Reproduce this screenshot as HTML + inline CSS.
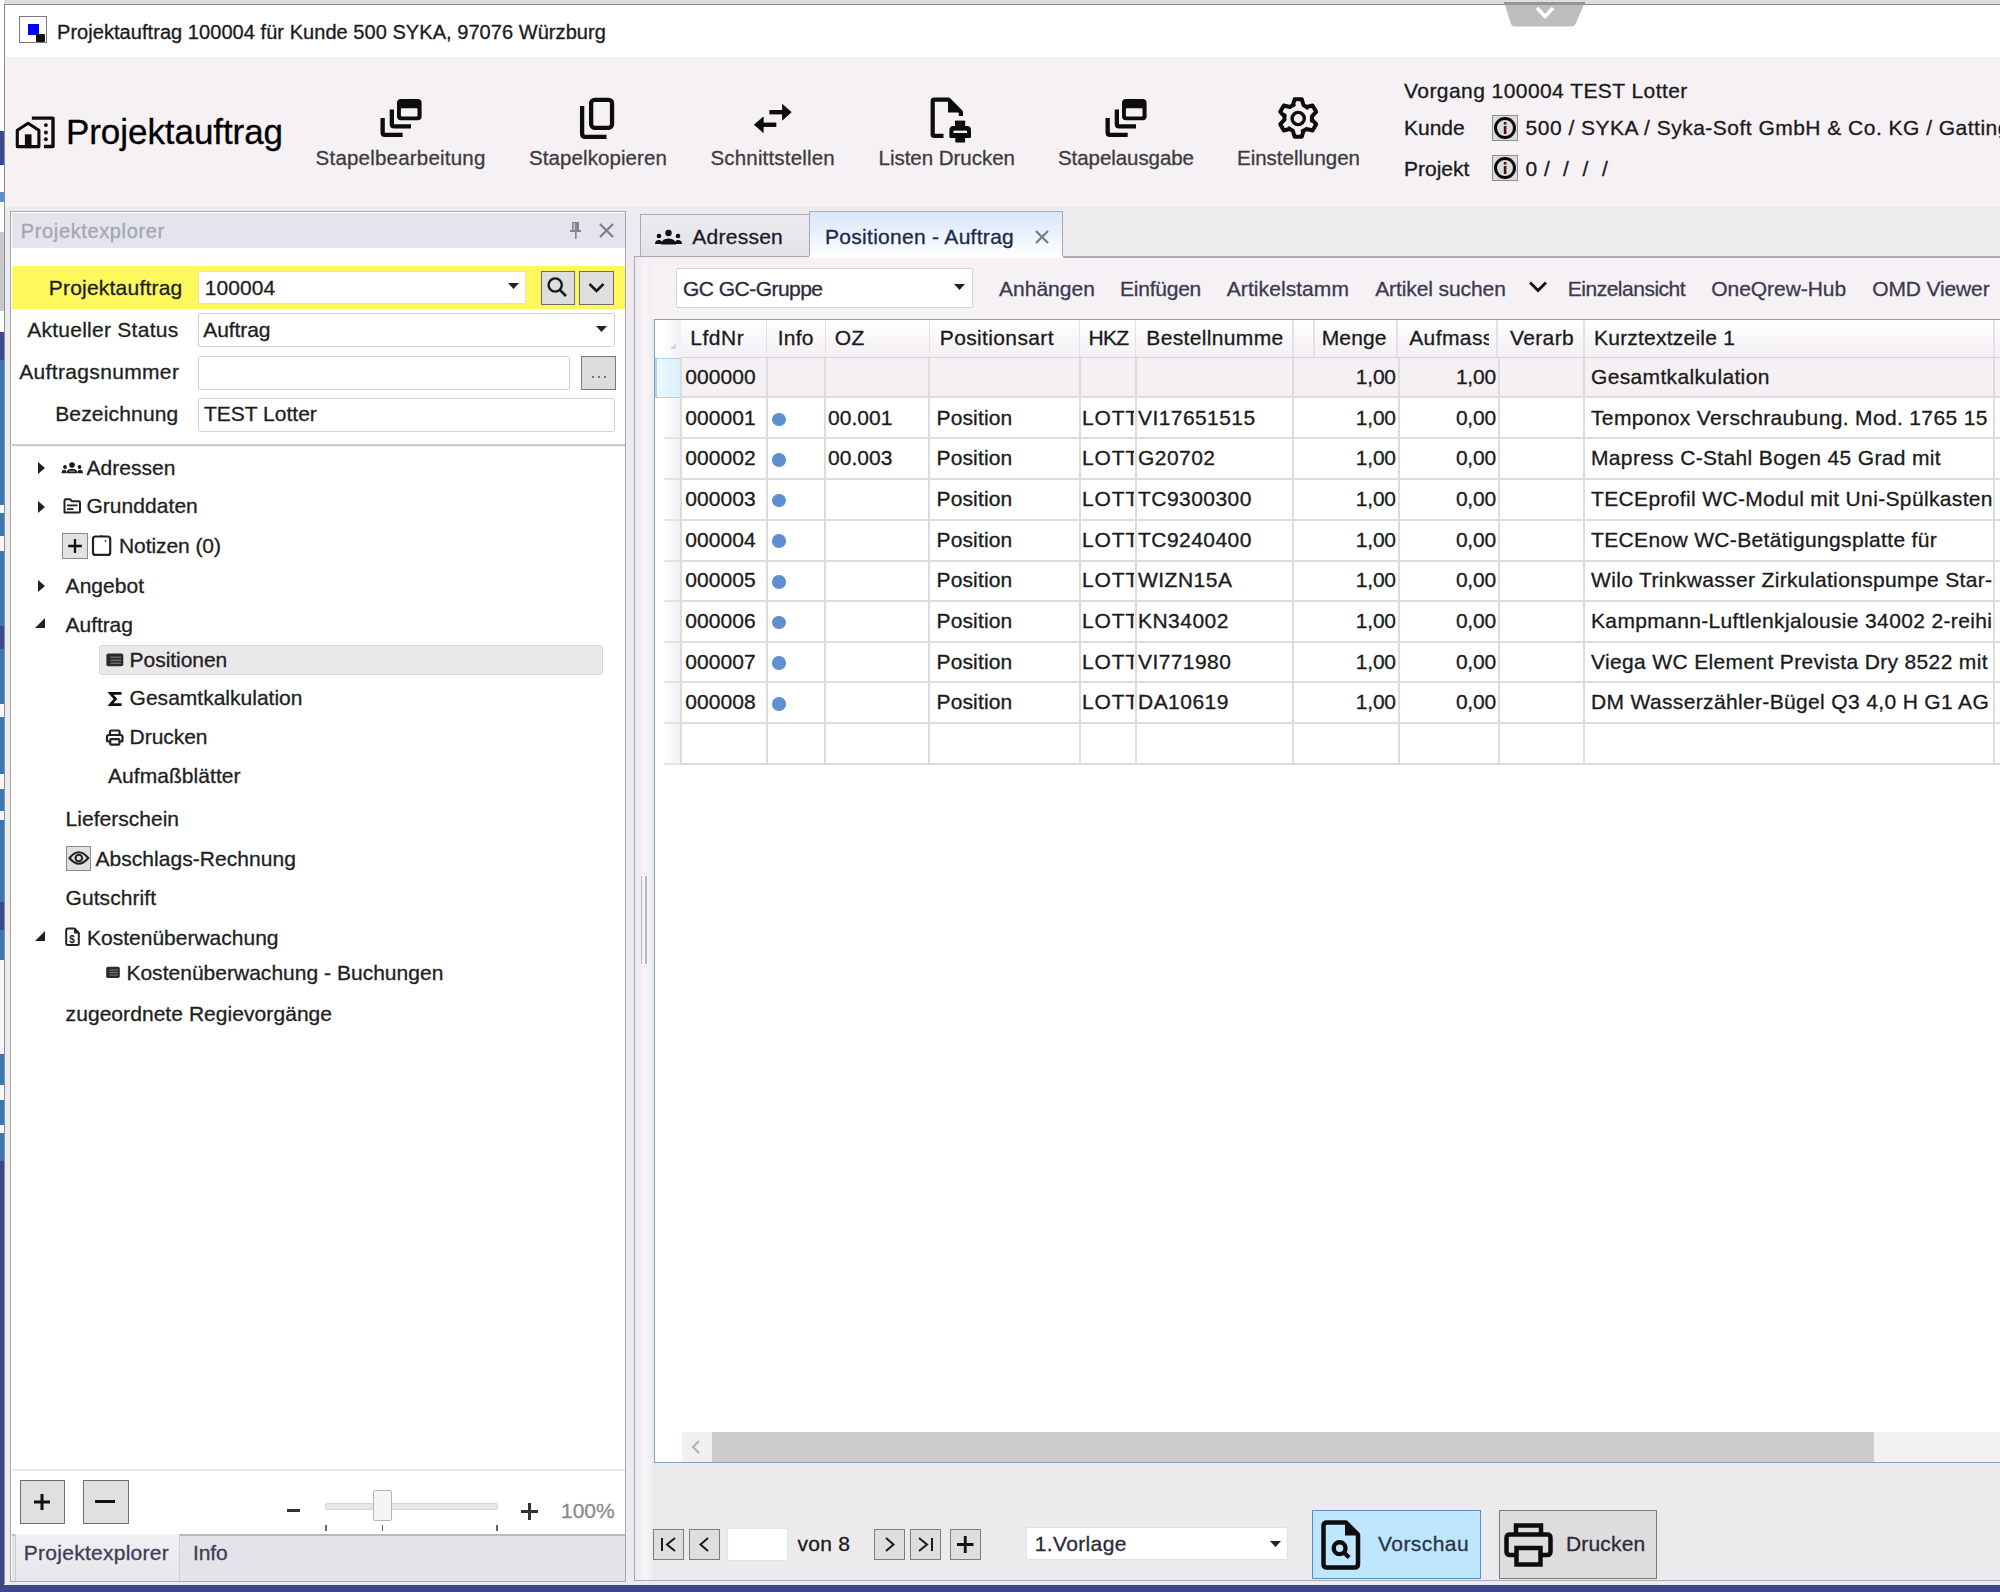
<!DOCTYPE html>
<html><head><meta charset="utf-8"><style>
html,body{margin:0;padding:0;width:2000px;height:1592px;overflow:hidden;background:#eeebef}
body>div,body>svg{position:absolute}
div>div.t{position:absolute}
.t{position:absolute;white-space:pre;font-family:"Liberation Sans",sans-serif;-webkit-text-stroke:0.3px currentColor}
svg{position:absolute;overflow:visible}
</style></head><body>
<div style="left:0px;top:0px;width:2000px;height:1592px;background:#eeebef"></div>
<div style="left:0px;top:0px;width:2000px;height:4px;background:#dedede"></div>
<div style="left:0px;top:0px;width:4px;height:1592px;background:#ffffff"></div>
<div style="left:0px;top:131px;width:4px;height:34px;background:#3d4a90"></div>
<div style="left:0px;top:192px;width:4px;height:10px;background:#5a8fd0"></div>
<div style="left:0px;top:232px;width:4px;height:79px;background:#c8c8cc"></div>
<div style="left:0px;top:332px;width:4px;height:28px;background:#3d4a90"></div>
<div style="left:0px;top:360px;width:4px;height:802px;background:#3b78b2"></div>
<div style="left:0px;top:505px;width:4px;height:8px;background:#f4f6fa"></div>
<div style="left:0px;top:536px;width:4px;height:15px;background:#f4f6fa"></div>
<div style="left:0px;top:704px;width:4px;height:13px;background:#f4f6fa"></div>
<div style="left:0px;top:774px;width:4px;height:15px;background:#f4f6fa"></div>
<div style="left:0px;top:811px;width:4px;height:9px;background:#f4f6fa"></div>
<div style="left:0px;top:960px;width:4px;height:94px;background:#f4f6fa"></div>
<div style="left:0px;top:1085px;width:4px;height:15px;background:#f4f6fa"></div>
<div style="left:0px;top:1125px;width:4px;height:8px;background:#f4f6fa"></div>
<div style="left:0px;top:626px;width:4px;height:23px;background:#3d4a90"></div>
<div style="left:0px;top:902px;width:4px;height:28px;background:#3d4a90"></div>
<div style="left:0px;top:1161px;width:4px;height:431px;background:#3d4688"></div>
<div style="left:0px;top:1584.5px;width:2000px;height:8px;background:#3d4688"></div>
<div style="left:4px;top:4px;width:1996px;height:1px;background:#8c8c8c"></div>
<div style="left:4px;top:4px;width:1px;height:1580px;background:#8c8c8c"></div>
<div style="left:5px;top:5px;width:1995px;height:52px;background:#ffffff"></div>
<div style="left:5px;top:57px;width:1995px;height:150px;background:#f5f1f5"></div>
<div style="left:19px;top:16px;width:26px;height:25px;border:1.5px solid #7a7a7a;background:#fff"></div>
<div style="left:28px;top:24px;width:11px;height:11px;background:#0000ff"></div>
<div style="left:36px;top:34px;width:9px;height:8px;background:#111;border-radius:1px"></div>
<div class="t" style="left:57.0px;top:21.6px;font-size:20px;line-height:20px;color:#1a1a1a;letter-spacing:0.053px;">Projektauftrag 100004 für Kunde 500 SYKA, 97076 Würzburg</div>
<svg style="left:1500px;top:0px" width="90" height="30" viewBox="1500 0 90 30"><path d="M1504 2 H1585 L1575.5 24 Q1574 26.5 1571 26.5 H1515 Q1512 26.5 1511 24 Z" fill="#bdbdbd"/><rect x="1504" y="2" width="81" height="3" fill="#959595"/><path d="M1537 8 L1545 16.5 L1553 8" stroke="#fff" stroke-width="3.4" fill="none"/></svg>
<div class="t" style="left:66.0px;top:114.4px;font-size:35px;line-height:35px;color:#000;letter-spacing:-0.065px;">Projektauftrag</div>
<div class="t" style="left:315.6px;top:147.9px;font-size:20.5px;line-height:20.5px;color:#3c3c3c;letter-spacing:0.208px;">Stapelbearbeitung</div>
<div class="t" style="left:529.0px;top:147.9px;font-size:20.5px;line-height:20.5px;color:#3c3c3c;letter-spacing:0.086px;">Stapelkopieren</div>
<div class="t" style="left:710.5px;top:147.9px;font-size:20.5px;line-height:20.5px;color:#3c3c3c;letter-spacing:0.168px;">Schnittstellen</div>
<div class="t" style="left:878.5px;top:147.9px;font-size:20.5px;line-height:20.5px;color:#3c3c3c;letter-spacing:-0.019px;">Listen Drucken</div>
<div class="t" style="left:1058.0px;top:147.9px;font-size:20.5px;line-height:20.5px;color:#3c3c3c;letter-spacing:-0.064px;">Stapelausgabe</div>
<div class="t" style="left:1237.0px;top:147.9px;font-size:20.5px;line-height:20.5px;color:#3c3c3c;letter-spacing:-0.008px;">Einstellungen</div>
<div class="t" style="left:1404.0px;top:80.4px;font-size:21px;line-height:21px;color:#1a1a1a;letter-spacing:0.435px;">Vorgang 100004 TEST Lotter</div>
<div class="t" style="left:1404.0px;top:116.7px;font-size:21px;line-height:21px;color:#1a1a1a;">Kunde</div>
<div class="t" style="left:1404.0px;top:157.7px;font-size:21px;line-height:21px;color:#1a1a1a;">Projekt</div>
<div class="t" style="left:1525.6px;top:116.7px;font-size:21px;line-height:21px;color:#1a1a1a;letter-spacing:0.480px;">500 / SYKA / Syka-Soft GmbH &amp; Co. KG / Gattingen</div>
<div class="t" style="left:1525.6px;top:157.7px;font-size:21px;line-height:21px;color:#1a1a1a;">0</div>
<div class="t" style="left:1544.0px;top:157.7px;font-size:21px;line-height:21px;color:#1a1a1a;">/</div>
<div class="t" style="left:1563.0px;top:157.7px;font-size:21px;line-height:21px;color:#1a1a1a;">/</div>
<div class="t" style="left:1582.5px;top:157.7px;font-size:21px;line-height:21px;color:#1a1a1a;">/</div>
<div class="t" style="left:1602.0px;top:157.7px;font-size:21px;line-height:21px;color:#1a1a1a;">/</div>
<div style="left:10px;top:211px;width:614px;height:1369px;border:1.5px solid #a6a7ae;background:#ffffff"></div>
<div style="left:11.5px;top:212.5px;width:613px;height:35px;background:#e3e4ec"></div>
<div class="t" style="left:20.8px;top:221.0px;font-size:20px;line-height:20px;color:#a3a6b2;letter-spacing:0.633px;">Projektexplorer</div>
<svg style="left:568px;top:221px" width="16" height="20" viewBox="0 0 16 20"><path d="M4 1 H11 V9 H13 V11 H2 V9 H4 Z" fill="#85868c"/><rect x="5.5" y="2" width="1.5" height="7" fill="#c8c9d0"/><rect x="7" y="11" width="1.6" height="7" fill="#85868c"/></svg>
<svg style="left:598px;top:222px" width="17" height="17" viewBox="0 0 17 17"><path d="M2 2 L15 15 M15 2 L2 15" stroke="#7e7f86" stroke-width="2.2"/></svg>
<div style="left:11.5px;top:266px;width:613px;height:43px;background:#fdf85c"></div>
<div class="t" style="left:48.8px;top:276.9px;font-size:21px;line-height:21px;color:#1e1e1e;letter-spacing:0.208px;">Projektauftrag</div>
<div style="left:198px;top:271px;width:328px;height:33px;background:#fff;border:1px solid #e6e6a0;box-sizing:border-box"></div>
<div class="t" style="left:204.8px;top:276.7px;font-size:21px;line-height:21px;color:#1e1e1e;letter-spacing:0.061px;">100004</div>
<svg style="left:507px;top:282px" width="13" height="8" viewBox="0 0 13 8"><path d="M1 1 H12 L6.5 7 Z" fill="#222"/></svg>
<div style="left:540.5px;top:270.7px;width:34px;height:34px;background:#dedede;border:1.5px solid #6d6d6d;box-sizing:border-box"></div>
<svg style="left:546px;top:276px" width="24" height="24" viewBox="0 0 24 24"><circle cx="9.2" cy="9" r="6.6" stroke="#1a1a1a" stroke-width="2.4" fill="none"/><path d="M13.8 13.8 L20 20" stroke="#1a1a1a" stroke-width="2.6"/></svg>
<div style="left:579px;top:270.7px;width:34.5px;height:34px;background:#dedede;border:1.5px solid #6d6d6d;box-sizing:border-box"></div>
<svg style="left:586px;top:280px" width="21" height="14" viewBox="0 0 21 14"><path d="M3.5 4 L10.5 11 L17.5 4" stroke="#1a1a1a" stroke-width="2.6" fill="none"/></svg>
<div class="t" style="left:27.2px;top:318.5px;font-size:21px;line-height:21px;color:#1e1e1e;letter-spacing:0.262px;">Aktueller Status</div>
<div style="left:198px;top:313px;width:417px;height:34px;background:#fff;border:1.5px solid #d2d2d4;box-sizing:border-box;border-radius:2px"></div>
<div class="t" style="left:203.2px;top:318.7px;font-size:21px;line-height:21px;color:#1e1e1e;letter-spacing:-0.067px;">Auftrag</div>
<svg style="left:595px;top:325px" width="13" height="8" viewBox="0 0 13 8"><path d="M1 1 H12 L6.5 7 Z" fill="#222"/></svg>
<div class="t" style="left:19.2px;top:360.9px;font-size:21px;line-height:21px;color:#1e1e1e;letter-spacing:0.344px;">Auftragsnummer</div>
<div style="left:198px;top:355.5px;width:372px;height:34px;background:#fff;border:1.5px solid #d2d2d4;box-sizing:border-box;border-radius:2px"></div>
<div style="left:581.3px;top:355.5px;width:34.3px;height:34px;background:#dcdcdc;border:1.5px solid #7a7a7a;box-sizing:border-box"></div>
<svg style="left:590px;top:375px" width="18" height="4" viewBox="0 0 18 4"><circle cx="3" cy="2" r="1" fill="#556"/><circle cx="9" cy="2" r="1" fill="#556"/><circle cx="15" cy="2" r="1" fill="#556"/></svg>
<div class="t" style="left:55.2px;top:403.3px;font-size:21px;line-height:21px;color:#1e1e1e;letter-spacing:0.166px;">Bezeichnung</div>
<div style="left:198px;top:398px;width:417px;height:34px;background:#fff;border:1.5px solid #d2d2d4;box-sizing:border-box;border-radius:2px"></div>
<div class="t" style="left:204.0px;top:403.3px;font-size:21px;line-height:21px;color:#1e1e1e;">TEST Lotter</div>
<div style="left:11.5px;top:444px;width:613px;height:1.5px;background:#c9c9cf"></div>
<div style="left:11.5px;top:445.5px;width:613px;height:1px;background:#f0f0f0"></div>
<svg style="left:36.5px;top:460.8px" width="9" height="14" viewBox="0 0 9 14"><path d="M1 1 L8 7 L1 13 Z" fill="#222"/></svg>
<svg style="left:58px;top:458px" width="30" height="20" viewBox="58 458 30 20"><circle cx="72" cy="465" r="2.8" fill="#1a1a1a"/><circle cx="65" cy="467" r="1.9" fill="#1a1a1a"/><circle cx="79.5" cy="467" r="1.9" fill="#1a1a1a"/><path d="M66.5 473.3 Q66.5 468.8 72 468.8 Q77.5 468.8 77.5 473.3 Z" fill="#1a1a1a"/><path d="M61.5 473.3 Q61.5 469.8 64.5 469.8 Q66.5 469.8 66.5 473.3 Z M77.5 473.3 Q77.5 469.8 80 469.8 Q83 469.8 83 473.3 Z" fill="#1a1a1a"/><rect x="69" y="470.6" width="6" height="1.2" fill="#888"/></svg>
<div class="t" style="left:86.4px;top:456.9px;font-size:21px;line-height:21px;color:#1e1e1e;letter-spacing:0.039px;">Adressen</div>
<svg style="left:36.5px;top:499.5px" width="9" height="14" viewBox="0 0 9 14"><path d="M1 1 L8 7 L1 13 Z" fill="#222"/></svg>
<svg style="left:60px;top:495px" width="25" height="22" viewBox="60 495 25 22"><path d="M64.5 512.5 V500.5 Q64.5 499.2 65.8 499.2 H70 L72 501.2 H78.5 Q80 501.2 80 502.7 V511 Q80 512.5 78.5 512.5 Z" stroke="#222" stroke-width="2" fill="none" stroke-linejoin="round"/><path d="M67 505.4 H77.5 M67 509.2 H73.5" stroke="#222" stroke-width="1.7"/></svg>
<div class="t" style="left:86.4px;top:495.3px;font-size:21px;line-height:21px;color:#1e1e1e;letter-spacing:0.054px;">Grunddaten</div>
<div style="left:62.4px;top:533.4px;width:25.6px;height:25.6px;background:#e2e2e2;border:1.5px solid #8a8a8a;box-sizing:border-box"></div>
<svg style="left:62px;top:533px" width="26" height="26" viewBox="62 533 26 26"><path d="M75 539 V553 M68.2 546 H81.8" stroke="#111" stroke-width="2.3"/></svg>
<svg style="left:89px;top:532px" width="26" height="27" viewBox="89 532 26 27"><rect x="93" y="536.5" width="17.2" height="18.4" rx="2.5" stroke="#222" stroke-width="2.2" fill="none"/><path d="M98.5 537 Q101.5 533.5 104.5 537 Z" fill="#222"/><circle cx="105.5" cy="541" r="0.9" fill="#444"/></svg>
<div class="t" style="left:119.0px;top:535.3px;font-size:21px;line-height:21px;color:#1e1e1e;letter-spacing:-0.081px;">Notizen (0)</div>
<svg style="left:36.5px;top:578.5px" width="9" height="14" viewBox="0 0 9 14"><path d="M1 1 L8 7 L1 13 Z" fill="#222"/></svg>
<div class="t" style="left:65.6px;top:574.7px;font-size:21px;line-height:21px;color:#1e1e1e;letter-spacing:0.030px;">Angebot</div>
<svg style="left:34px;top:617px" width="12" height="12" viewBox="0 0 12 12"><path d="M11 1 V11 H1 Z" fill="#222"/></svg>
<div class="t" style="left:65.6px;top:613.7px;font-size:21px;line-height:21px;color:#1e1e1e;letter-spacing:-0.067px;">Auftrag</div>
<div style="left:99.2px;top:644.8px;width:504px;height:30.4px;background:#ebe8ec;border:1px solid #d8d6da;box-sizing:border-box;border-radius:3px"></div>
<svg style="left:104px;top:651px" width="22" height="18" viewBox="104 651 22 18"><rect x="106.4" y="653.5" width="16.9" height="12.8" rx="2" fill="#2a2a2a"/><path d="M110.5 657.2 H121 M110.5 660.2 H121 M110.5 663.2 H121" stroke="#8a8a8a" stroke-width="1"/></svg>
<div class="t" style="left:129.6px;top:648.9px;font-size:21px;line-height:21px;color:#1e1e1e;letter-spacing:-0.043px;">Positionen</div>
<svg style="left:106px;top:689px" width="18" height="20" viewBox="106 689 18 20"><path d="M120.2 693.3 H110.5 L115.5 699 L110.5 704.6 H120.2" stroke="#111" stroke-width="2.8" fill="none" stroke-linejoin="miter" stroke-linecap="square"/></svg>
<div class="t" style="left:129.6px;top:687.3px;font-size:21px;line-height:21px;color:#1e1e1e;letter-spacing:0.006px;">Gesamtkalkulation</div>
<svg style="left:103px;top:727px" width="23" height="22" viewBox="103 727 23 22"><path d="M110 735 V731.5 Q110 730.5 111 730.5 H118.5 Q119.5 730.5 119.5 731.5 V735" stroke="#222" stroke-width="2.2" fill="none"/><path d="M110 741.5 H108.5 Q107 741.5 107 740 V737 Q107 735 109 735 H120.5 Q122.5 735 122.5 737 V740 Q122.5 741.5 121 741.5 H119.5" stroke="#222" stroke-width="2.2" fill="none"/><rect x="110.2" y="739.2" width="9.2" height="5.5" rx="1" stroke="#222" stroke-width="2.2" fill="none"/></svg>
<div class="t" style="left:129.6px;top:725.7px;font-size:21px;line-height:21px;color:#1e1e1e;letter-spacing:-0.055px;">Drucken</div>
<div class="t" style="left:108.0px;top:764.7px;font-size:21px;line-height:21px;color:#1e1e1e;letter-spacing:0.058px;">Aufmaßblätter</div>
<div class="t" style="left:65.6px;top:808.1px;font-size:21px;line-height:21px;color:#1e1e1e;letter-spacing:0.016px;">Lieferschein</div>
<div style="left:65.6px;top:845.6px;width:25.6px;height:25.6px;background:#e0e0e0;border:1.5px solid #8a8a8a;box-sizing:border-box"></div>
<svg style="left:66px;top:846px" width="26" height="26" viewBox="66 846 26 26"><path d="M69.5 858 Q78.8 846.5 88.2 858 Q78.8 869.5 69.5 858 Z" stroke="#222" stroke-width="2.1" fill="none"/><circle cx="78.8" cy="858" r="3.3" stroke="#222" stroke-width="2" fill="none"/></svg>
<div class="t" style="left:95.4px;top:848.1px;font-size:21px;line-height:21px;color:#1e1e1e;letter-spacing:0.058px;">Abschlags-Rechnung</div>
<div class="t" style="left:65.6px;top:887.1px;font-size:21px;line-height:21px;color:#1e1e1e;letter-spacing:0.057px;">Gutschrift</div>
<svg style="left:34px;top:930px" width="12" height="12" viewBox="0 0 12 12"><path d="M11 1 V11 H1 Z" fill="#222"/></svg>
<svg style="left:63px;top:926px" width="19" height="22" viewBox="63 926 19 22"><path d="M67.5 928.5 H74.5 L78.8 933 V943.5 Q78.8 945 77.3 945 H67.5 Q66.2 945 66.2 943.5 V930 Q66.2 928.5 67.5 928.5 Z" stroke="#222" stroke-width="2" fill="none" stroke-linejoin="round"/><path d="M74 928 L79.5 933.5 H74 Z" fill="#222"/><text x="69.2" y="942.5" font-size="10" font-weight="bold" font-family="Liberation Sans" fill="#222">$</text></svg>
<div class="t" style="left:87.0px;top:926.5px;font-size:21px;line-height:21px;color:#1e1e1e;letter-spacing:0.001px;">Kostenüberwachung</div>
<svg style="left:104px;top:965px" width="18" height="15" viewBox="104 965 18 15"><rect x="106.2" y="966.8" width="13.6" height="11.3" rx="1.8" fill="#2a2a2a"/><path d="M109.5 970 H118 M109.5 972.5 H118 M109.5 975 H118" stroke="#8a8a8a" stroke-width="0.9"/></svg>
<div class="t" style="left:126.4px;top:961.7px;font-size:21px;line-height:21px;color:#1e1e1e;letter-spacing:0.019px;">Kostenüberwachung - Buchungen</div>
<div class="t" style="left:65.6px;top:1003.3px;font-size:21px;line-height:21px;color:#1e1e1e;letter-spacing:0.059px;">zugeordnete Regievorgänge</div>
<div style="left:11.5px;top:1469px;width:613px;height:1.5px;background:#e8e8ea"></div>
<div style="left:19.8px;top:1479.6px;width:45.2px;height:44.4px;background:#e0e0e0;border:1.5px solid #6e6e6e;box-sizing:border-box"></div>
<svg style="left:30px;top:1490px" width="24" height="24" viewBox="0 0 24 24"><path d="M12 4 V20 M4 12 H20" stroke="#111" stroke-width="3"/></svg>
<div style="left:83.2px;top:1479.6px;width:45.5px;height:44.4px;background:#e0e0e0;border:1.5px solid #6e6e6e;box-sizing:border-box"></div>
<div style="left:95px;top:1500px;width:20px;height:3.2px;background:#111"></div>
<div style="left:287px;top:1509px;width:13px;height:3px;background:#333"></div>
<div style="left:325px;top:1502.5px;width:173px;height:7px;background:#e6e6e6;border:1px solid #d6d6d6;box-sizing:border-box;border-radius:2px"></div>
<div style="left:373px;top:1489.5px;width:19px;height:31.5px;background:#f7f4f7;border:1.5px solid #b5b5b8;box-sizing:border-box;border-radius:2px"></div>
<div style="left:325px;top:1525px;width:1.5px;height:6px;background:#666"></div>
<div style="left:381.5px;top:1525px;width:1.5px;height:6px;background:#666"></div>
<div style="left:496px;top:1525px;width:1.5px;height:6px;background:#666"></div>
<svg style="left:519px;top:1501px" width="21" height="21" viewBox="0 0 21 21"><path d="M10.5 2 V19 M2 10.5 H19" stroke="#333" stroke-width="3"/></svg>
<div class="t" style="left:561.0px;top:1499.9px;font-size:21px;line-height:21px;color:#8a8a8a;letter-spacing:-0.047px;">100%</div>
<div style="left:11.5px;top:1534px;width:613px;height:47px;background:#e3e3e9"></div>
<div style="left:11.5px;top:1534px;width:613px;height:1.5px;background:#b8b8be"></div>
<div style="left:15px;top:1534px;width:165px;height:47px;background:linear-gradient(#f1f0f3,#e6e6ea);border-left:1px solid #cfcfd4;border-right:1px solid #cfcfd4;box-sizing:border-box"></div>
<div class="t" style="left:23.8px;top:1542.2px;font-size:21px;line-height:21px;color:#3d3d55;letter-spacing:0.266px;">Projektexplorer</div>
<div class="t" style="left:193.0px;top:1542.2px;font-size:21px;line-height:21px;color:#3d3d55;letter-spacing:-0.075px;">Info</div>
<svg style="left:375px;top:95px" width="52" height="46" viewBox="375 95 52 46"><g transform="translate(0 0)"><rect x="397" y="99" width="24.6" height="21.2" rx="4" fill="#0d0d0d"/><rect x="400.9" y="108.2" width="16.6" height="8.4" rx="0.8" fill="#f5f1f5"/><path d="M391.85 109.6 V124 Q391.85 126.4 394.2 126.4 H411" stroke="#0d0d0d" stroke-width="4.3" fill="none"/><path d="M382.65 118 V132.5 Q382.65 134.85 385 134.85 H402.7" stroke="#0d0d0d" stroke-width="4.3" fill="none"/></g></svg>
<svg style="left:1100px;top:95px" width="52" height="46" viewBox="1100 95 52 46"><g transform="translate(725 0)"><rect x="397" y="99" width="24.6" height="21.2" rx="4" fill="#0d0d0d"/><rect x="400.9" y="108.2" width="16.6" height="8.4" rx="0.8" fill="#f5f1f5"/><path d="M391.85 109.6 V124 Q391.85 126.4 394.2 126.4 H411" stroke="#0d0d0d" stroke-width="4.3" fill="none"/><path d="M382.65 118 V132.5 Q382.65 134.85 385 134.85 H402.7" stroke="#0d0d0d" stroke-width="4.3" fill="none"/></g></svg>
<svg style="left:575px;top:94px" width="45" height="48" viewBox="575 94 45 48"><rect x="591.15" y="99.85" width="20.9" height="28" rx="3.5" stroke="#0d0d0d" stroke-width="4.3" fill="none"/><path d="M582.1 106 V133.5 Q582.1 136.85 585.5 136.85 H606.5" stroke="#0d0d0d" stroke-width="4.3" fill="none"/></svg>
<svg style="left:750px;top:100px" width="45" height="36" viewBox="750 100 45 36"><path d="M769.4 112.2 H785" stroke="#0d0d0d" stroke-width="4.4"/><path d="M782.5 104.4 L791.2 112.2 L782.5 120 Z" fill="#0d0d0d" stroke="#0d0d0d" stroke-width="0.8" stroke-linejoin="round"/><path d="M761 124.75 H776.3" stroke="#0d0d0d" stroke-width="4.4"/><path d="M763.2 117 L754.4 124.75 L763.2 132.5 Z" fill="#0d0d0d" stroke="#0d0d0d" stroke-width="0.8" stroke-linejoin="round"/></svg>
<svg style="left:925px;top:94px" width="52" height="52" viewBox="925 94 52 52"><path d="M943.5 135.9 H934 Q932.7 135.9 932.7 134.6 V101 Q932.7 99.6 934 99.6 H948.5 L960.9 112 V116" stroke="#0d0d0d" stroke-width="4.2" fill="none" stroke-linejoin="round"/><path d="M948 97.5 L963 112.5 H948 Z" fill="#0d0d0d"/><rect x="955" y="120.6" width="10.2" height="6" fill="#0d0d0d"/><path d="M949.4 136.5 V130 Q949.4 126 953.4 126 H967 Q971 126 971 130 V136.5 Q971 138 969.5 138 H951 Q949.4 138 949.4 136.5 Z" fill="#0d0d0d"/><rect x="953.5" y="130.6" width="13.5" height="2.4" fill="#f5f1f5"/><rect x="955.3" y="133" width="9.8" height="9.5" fill="#0d0d0d"/></svg>
<svg style="left:1272px;top:92px" width="52" height="52" viewBox="1272 92 52 52"><path d="M1292.83 105.29 L1294.61 99.34 L1301.79 99.34 L1303.57 105.29 L1305.41 106.24 L1307.30 107.63 L1306.52 106.99 L1312.56 105.56 L1316.15 111.78 L1311.89 116.30 L1312.00 118.36 L1311.73 120.69 L1311.89 119.70 L1316.15 124.22 L1312.56 130.44 L1306.52 129.01 L1304.78 130.13 L1302.64 131.07 L1303.57 130.71 L1301.79 136.66 L1294.61 136.66 L1292.83 130.71 L1290.99 129.76 L1289.10 128.37 L1289.88 129.01 L1283.84 130.44 L1280.25 124.22 L1284.51 119.70 L1284.40 117.64 L1284.67 115.31 L1284.51 116.30 L1280.25 111.78 L1283.84 105.56 L1289.88 106.99 L1291.62 105.87 L1293.76 104.93 Z" stroke="#0d0d0d" stroke-width="4" fill="none" stroke-linejoin="round"/><circle cx="1298.2" cy="118.5" r="6.1" stroke="#0d0d0d" stroke-width="3.4" fill="none"/></svg>
<svg style="left:12px;top:112px" width="48" height="40" viewBox="12 112 48 40"><path d="M17.3 146.6 V130.3 L28.1 123.2 L38.9 130.3 V146.6 Z" stroke="#0d0d0d" stroke-width="3.1" fill="none" stroke-linejoin="round"/><rect x="24.9" y="134.3" width="6.65" height="13.85" fill="#0d0d0d"/><path d="M31.85 118.1 H53 V146.5 H44" stroke="#0d0d0d" stroke-width="3.4" fill="none" stroke-linejoin="round"/><circle cx="45.9" cy="125.1" r="1.95" fill="#0d0d0d"/><circle cx="45.9" cy="132.5" r="1.95" fill="#0d0d0d"/><circle cx="45.9" cy="139.3" r="1.95" fill="#0d0d0d"/></svg>
<div style="left:1491.5px;top:115px;width:26.5px;height:25.5px;background:#dcdcdc;border:1.5px solid #8f8f8f;box-sizing:border-box"></div>
<svg style="left:1492.5px;top:116px" width="24" height="24" viewBox="0 0 24 24"><circle cx="12" cy="12" r="9.5" stroke="#0a0a0a" stroke-width="3" fill="none"/><rect x="10.8" y="6" width="2.6" height="2.6" fill="#4a1010"/><rect x="10.8" y="10" width="2.6" height="8" fill="#4a1010"/></svg>
<div style="left:1491.5px;top:155px;width:26.5px;height:25.5px;background:#dcdcdc;border:1.5px solid #8f8f8f;box-sizing:border-box"></div>
<svg style="left:1492.5px;top:156px" width="24" height="24" viewBox="0 0 24 24"><circle cx="12" cy="12" r="9.5" stroke="#0a0a0a" stroke-width="3" fill="none"/><rect x="10.8" y="6" width="2.6" height="2.6" fill="#4a1010"/><rect x="10.8" y="10" width="2.6" height="8" fill="#4a1010"/></svg>
<div style="left:626px;top:211px;width:8px;height:1370px;background:#eeebef"></div>
<div style="left:639.5px;top:214px;width:170px;height:43px;background:linear-gradient(#ecebf0,#e2e2e8);border:1.5px solid #a9aab2;border-bottom:none;box-sizing:border-box"></div>
<svg style="left:654px;top:229px" width="29" height="16" viewBox="0 0 29 16"><circle cx="5" cy="7" r="2.3" fill="#111"/><circle cx="14.5" cy="4" r="3.2" fill="#111"/><circle cx="24" cy="7" r="2.3" fill="#111"/><path d="M1 15 Q1 11 5 11 Q8 11 8.5 15 Z M7 15.5 Q7.5 9.5 14.5 9.5 Q21.5 9.5 22 15.5 Z M20.5 15 Q21 11 24 11 Q28 11 28 15 Z" fill="#111"/></svg>
<div class="t" style="left:692.3px;top:225.5px;font-size:21px;line-height:21px;color:#1a1a2a;letter-spacing:0.252px;">Adressen</div>
<div style="left:809px;top:210.5px;width:254px;height:47px;background:linear-gradient(#d9e6fb,#eef3fd 55%,#ffffff);border:1.5px solid #a9aab4;border-bottom:none;box-sizing:border-box"></div>
<div class="t" style="left:825.0px;top:225.5px;font-size:21px;line-height:21px;color:#1a2a4a;letter-spacing:0.290px;">Positionen - Auftrag</div>
<svg style="left:1034px;top:229px" width="16" height="16" viewBox="0 0 16 16"><path d="M2 2 L14 14 M14 2 L2 14" stroke="#7a7a80" stroke-width="2.2"/></svg>
<div style="left:634px;top:256.3px;width:1366px;height:1325px;border:1.5px solid #a9aab2;border-right:none;background:#eceaed;box-sizing:border-box"></div>
<div style="left:652px;top:257.8px;width:1348px;height:61px;background:#f5f1f5"></div>
<div style="left:1063px;top:256.3px;width:937px;height:1.5px;background:#a9aab2"></div>
<div style="left:809px;top:256.3px;width:254px;height:1.5px;background:#ffffff"></div>
<div style="left:636px;top:257.8px;width:16px;height:1322px;background:linear-gradient(90deg,#eceaee,#f7f5f8 60%,#f0edf1)"></div>
<div style="left:640.5px;top:875.5px;width:1.5px;height:88px;background:#b8b8bc"></div>
<div style="left:645px;top:875.5px;width:1.5px;height:88px;background:#b8b8bc"></div>
<div style="left:675.5px;top:267.5px;width:297.5px;height:40.5px;background:#fff;border:1.5px solid #d4d2d6;box-sizing:border-box;border-radius:2px"></div>
<div class="t" style="left:683.0px;top:278.0px;font-size:21px;line-height:21px;color:#2a2a3a;letter-spacing:-0.529px;">GC GC-Gruppe</div>
<svg style="left:953px;top:283px" width="13" height="8" viewBox="0 0 13 8"><path d="M1 1 H12 L6.5 7 Z" fill="#222"/></svg>
<div class="t" style="left:999.0px;top:278.0px;font-size:21px;line-height:21px;color:#3a3a50;letter-spacing:0.012px;">Anhängen</div>
<div class="t" style="left:1120.0px;top:278.0px;font-size:21px;line-height:21px;color:#3a3a50;letter-spacing:-0.232px;">Einfügen</div>
<div class="t" style="left:1226.8px;top:278.0px;font-size:21px;line-height:21px;color:#3a3a50;letter-spacing:0.071px;">Artikelstamm</div>
<div class="t" style="left:1375.2px;top:278.0px;font-size:21px;line-height:21px;color:#3a3a50;letter-spacing:-0.097px;">Artikel suchen</div>
<svg style="left:1528px;top:280px" width="20" height="14" viewBox="0 0 20 14"><path d="M2 2.5 L10 10.5 L18 2.5" stroke="#111" stroke-width="2.8" fill="none"/></svg>
<div class="t" style="left:1567.8px;top:278.0px;font-size:21px;line-height:21px;color:#3a3a50;letter-spacing:-0.496px;">Einzelansicht</div>
<div class="t" style="left:1711.3px;top:278.0px;font-size:21px;line-height:21px;color:#3a3a50;letter-spacing:-0.060px;">OneQrew-Hub</div>
<div class="t" style="left:1872.3px;top:278.0px;font-size:21px;line-height:21px;color:#3a3a50;letter-spacing:-0.144px;">OMD Viewer</div>
<div style="left:653.5px;top:318.5px;width:1347px;height:1144px;border:1.8px solid #84a0bd;border-right:none;background:#fff;box-sizing:border-box"></div>
<div style="left:655px;top:320px;width:1345px;height:37.5px;background:linear-gradient(#ffffff,#f3eff3)"></div>
<div style="left:655px;top:356.5px;width:1345px;height:1.5px;background:#d6d4d8"></div>
<div style="left:655px;top:320px;width:26px;height:444px;background:linear-gradient(90deg,#ffffff 30%,#f1eff4)"></div>
<svg style="left:668px;top:341px" width="9" height="9" viewBox="0 0 9 9"><path d="M8 2 V8 H2 Z" fill="#d6d6da"/></svg>
<div style="left:766.0999999999999px;top:320px;width:1.4px;height:37px;background:#e4e2e6"></div>
<div style="left:824.5999999999999px;top:320px;width:1.4px;height:37px;background:#e4e2e6"></div>
<div style="left:928.5px;top:320px;width:1.4px;height:37px;background:#e4e2e6"></div>
<div style="left:1078.8px;top:320px;width:1.4px;height:37px;background:#e4e2e6"></div>
<div style="left:1134.8px;top:320px;width:1.4px;height:37px;background:#e4e2e6"></div>
<div style="left:1292.3px;top:320px;width:1.4px;height:37px;background:#e4e2e6"></div>
<div style="left:1313.3px;top:320px;width:1.4px;height:37px;background:#e4e2e6"></div>
<div style="left:1396.3px;top:320px;width:1.4px;height:37px;background:#e4e2e6"></div>
<div style="left:1496.3px;top:320px;width:1.4px;height:37px;background:#e4e2e6"></div>
<div style="left:1583.3px;top:320px;width:1.4px;height:37px;background:#e4e2e6"></div>
<div style="left:1993.3px;top:320px;width:1.4px;height:37px;background:#e4e2e6"></div>
<div class="t" style="left:690.2px;top:327.0px;font-size:21px;line-height:21px;color:#1a1a1a;letter-spacing:0.531px;">LfdNr</div>
<div class="t" style="left:777.7px;top:327.0px;font-size:21px;line-height:21px;color:#1a1a1a;letter-spacing:0.250px;">Info</div>
<div class="t" style="left:834.8px;top:327.0px;font-size:21px;line-height:21px;color:#1a1a1a;letter-spacing:0.422px;">OZ</div>
<div class="t" style="left:939.8px;top:327.0px;font-size:21px;line-height:21px;color:#1a1a1a;letter-spacing:0.359px;">Positionsart</div>
<div class="t" style="left:1088.5px;top:327.0px;font-size:21px;line-height:21px;color:#1a1a1a;letter-spacing:-0.667px;">HKZ</div>
<div style="left:1146.3px;top:320px;width:138px;height:37px;overflow:hidden;position:absolute"><div class="t" style="left:0;top:7.0px;font-size:21px;line-height:21px;color:#1a1a1a;letter-spacing:0.35px">Bestellnummer</div></div>
<div class="t" style="left:1321.7px;top:327.0px;font-size:21px;line-height:21px;color:#1a1a1a;letter-spacing:0.163px;">Menge</div>
<div style="left:1409.2px;top:320px;width:80px;height:37px;overflow:hidden;position:absolute"><div class="t" style="left:0;top:7.0px;font-size:21px;line-height:21px;color:#1a1a1a;letter-spacing:0.4px">Aufmass</div></div>
<div class="t" style="left:1510.0px;top:327.0px;font-size:21px;line-height:21px;color:#1a1a1a;letter-spacing:0.357px;">Verarb</div>
<div class="t" style="left:1594.0px;top:327.0px;font-size:21px;line-height:21px;color:#1a1a1a;letter-spacing:0.221px;">Kurztextzeile 1</div>
<div style="left:681px;top:357.5px;width:1319px;height:40.66px;background:#f4f0f4"></div>
<div style="left:655px;top:357.5px;width:26px;height:40.66px;background:linear-gradient(90deg,#f0f8fd,#d9eefb)"></div>
<div style="left:655px;top:357.5px;width:26px;height:1.5px;background:#a8d4f2"></div>
<div style="left:655px;top:396.65999999999997px;width:26px;height:1.5px;background:#a8d4f2"></div>
<div style="left:679.5px;top:357.5px;width:1.5px;height:40.66px;background:#a8d4f2"></div>
<div style="left:655px;top:357.5px;width:1.5px;height:40.66px;background:#a8d4f2"></div>
<div style="left:681px;top:396px;width:1319px;height:2px;background:#dcdcdc"></div>
<div class="t" style="left:685.2px;top:366.1px;font-size:21px;line-height:21px;color:#1a1a1a;letter-spacing:0.061px;">000000</div>
<div class="t" style="left:1355.8px;top:366.1px;font-size:21px;line-height:21px;color:#1a1a1a;letter-spacing:-0.211px;">1,00</div>
<div class="t" style="left:1455.9px;top:366.1px;font-size:21px;line-height:21px;color:#1a1a1a;letter-spacing:-0.211px;">1,00</div>
<div style="left:1586px;top:357.5px;width:406px;height:40.66px;overflow:hidden;position:absolute"><div class="t" style="left:5px;top:8.6px;font-size:21px;line-height:21px;color:#1a1a1a;letter-spacing:0.35px">Gesamtkalkulation</div></div>
<div style="left:681px;top:437px;width:1319px;height:2px;background:#dcdcdc"></div>
<div style="left:664px;top:437px;width:17px;height:2px;background:#e4e3e8"></div>
<div class="t" style="left:685.2px;top:406.8px;font-size:21px;line-height:21px;color:#1a1a1a;letter-spacing:0.061px;">000001</div>
<div style="left:772px;top:412.5px;width:13.5px;height:13.5px;border-radius:50%;background:#5f8fd0"></div>
<div class="t" style="left:828.0px;top:406.8px;font-size:21px;line-height:21px;color:#1a1a1a;letter-spacing:0.019px;">00.001</div>
<div class="t" style="left:936.5px;top:406.8px;font-size:21px;line-height:21px;color:#1a1a1a;letter-spacing:0.139px;">Position</div>
<div style="left:1082px;top:398.15999999999997px;width:52px;height:40.66px;overflow:hidden;position:absolute"><div class="t" style="left:0;top:8.6px;font-size:21px;line-height:21px;color:#1a1a1a;letter-spacing:0.9px">LOTT</div></div>
<div class="t" style="left:1138.0px;top:406.8px;font-size:21px;line-height:21px;color:#1a1a1a;letter-spacing:0.420px;">VI17651515</div>
<div class="t" style="left:1355.8px;top:406.8px;font-size:21px;line-height:21px;color:#1a1a1a;letter-spacing:-0.211px;">1,00</div>
<div class="t" style="left:1455.9px;top:406.8px;font-size:21px;line-height:21px;color:#1a1a1a;letter-spacing:-0.211px;">0,00</div>
<div style="left:1586px;top:398.15999999999997px;width:406px;height:40.66px;overflow:hidden;position:absolute"><div class="t" style="left:5px;top:8.6px;font-size:21px;line-height:21px;color:#1a1a1a;letter-spacing:0.35px">Temponox Verschraubung. Mod. 1765 15</div></div>
<div style="left:681px;top:478px;width:1319px;height:2px;background:#dcdcdc"></div>
<div style="left:664px;top:478px;width:17px;height:2px;background:#e4e3e8"></div>
<div class="t" style="left:685.2px;top:447.4px;font-size:21px;line-height:21px;color:#1a1a1a;letter-spacing:0.061px;">000002</div>
<div style="left:772px;top:453.1px;width:13.5px;height:13.5px;border-radius:50%;background:#5f8fd0"></div>
<div class="t" style="left:828.0px;top:447.4px;font-size:21px;line-height:21px;color:#1a1a1a;letter-spacing:0.019px;">00.003</div>
<div class="t" style="left:936.5px;top:447.4px;font-size:21px;line-height:21px;color:#1a1a1a;letter-spacing:0.139px;">Position</div>
<div style="left:1082px;top:438.82px;width:52px;height:40.66px;overflow:hidden;position:absolute"><div class="t" style="left:0;top:8.6px;font-size:21px;line-height:21px;color:#1a1a1a;letter-spacing:0.9px">LOTT</div></div>
<div class="t" style="left:1138.0px;top:447.4px;font-size:21px;line-height:21px;color:#1a1a1a;letter-spacing:0.462px;">G20702</div>
<div class="t" style="left:1355.8px;top:447.4px;font-size:21px;line-height:21px;color:#1a1a1a;letter-spacing:-0.211px;">1,00</div>
<div class="t" style="left:1455.9px;top:447.4px;font-size:21px;line-height:21px;color:#1a1a1a;letter-spacing:-0.211px;">0,00</div>
<div style="left:1586px;top:438.82px;width:406px;height:40.66px;overflow:hidden;position:absolute"><div class="t" style="left:5px;top:8.6px;font-size:21px;line-height:21px;color:#1a1a1a;letter-spacing:0.35px">Mapress C-Stahl Bogen 45 Grad mit</div></div>
<div style="left:681px;top:519px;width:1319px;height:2px;background:#dcdcdc"></div>
<div style="left:664px;top:519px;width:17px;height:2px;background:#e4e3e8"></div>
<div class="t" style="left:685.2px;top:488.1px;font-size:21px;line-height:21px;color:#1a1a1a;letter-spacing:0.061px;">000003</div>
<div style="left:772px;top:493.8px;width:13.5px;height:13.5px;border-radius:50%;background:#5f8fd0"></div>
<div class="t" style="left:936.5px;top:488.1px;font-size:21px;line-height:21px;color:#1a1a1a;letter-spacing:0.139px;">Position</div>
<div style="left:1082px;top:479.48px;width:52px;height:40.66px;overflow:hidden;position:absolute"><div class="t" style="left:0;top:8.6px;font-size:21px;line-height:21px;color:#1a1a1a;letter-spacing:0.9px">LOTT</div></div>
<div class="t" style="left:1138.0px;top:488.1px;font-size:21px;line-height:21px;color:#1a1a1a;letter-spacing:0.452px;">TC9300300</div>
<div class="t" style="left:1355.8px;top:488.1px;font-size:21px;line-height:21px;color:#1a1a1a;letter-spacing:-0.211px;">1,00</div>
<div class="t" style="left:1455.9px;top:488.1px;font-size:21px;line-height:21px;color:#1a1a1a;letter-spacing:-0.211px;">0,00</div>
<div style="left:1586px;top:479.48px;width:406px;height:40.66px;overflow:hidden;position:absolute"><div class="t" style="left:5px;top:8.6px;font-size:21px;line-height:21px;color:#1a1a1a;letter-spacing:0.35px">TECEprofil WC-Modul mit Uni-Spülkasten</div></div>
<div style="left:681px;top:560px;width:1319px;height:2px;background:#dcdcdc"></div>
<div style="left:664px;top:560px;width:17px;height:2px;background:#e4e3e8"></div>
<div class="t" style="left:685.2px;top:528.8px;font-size:21px;line-height:21px;color:#1a1a1a;letter-spacing:0.061px;">000004</div>
<div style="left:772px;top:534.4px;width:13.5px;height:13.5px;border-radius:50%;background:#5f8fd0"></div>
<div class="t" style="left:936.5px;top:528.8px;font-size:21px;line-height:21px;color:#1a1a1a;letter-spacing:0.139px;">Position</div>
<div style="left:1082px;top:520.14px;width:52px;height:40.66px;overflow:hidden;position:absolute"><div class="t" style="left:0;top:8.6px;font-size:21px;line-height:21px;color:#1a1a1a;letter-spacing:0.9px">LOTT</div></div>
<div class="t" style="left:1138.0px;top:528.8px;font-size:21px;line-height:21px;color:#1a1a1a;letter-spacing:0.452px;">TC9240400</div>
<div class="t" style="left:1355.8px;top:528.8px;font-size:21px;line-height:21px;color:#1a1a1a;letter-spacing:-0.211px;">1,00</div>
<div class="t" style="left:1455.9px;top:528.8px;font-size:21px;line-height:21px;color:#1a1a1a;letter-spacing:-0.211px;">0,00</div>
<div style="left:1586px;top:520.14px;width:406px;height:40.66px;overflow:hidden;position:absolute"><div class="t" style="left:5px;top:8.6px;font-size:21px;line-height:21px;color:#1a1a1a;letter-spacing:0.35px">TECEnow WC-Betätigungsplatte für</div></div>
<div style="left:681px;top:600px;width:1319px;height:2px;background:#dcdcdc"></div>
<div style="left:664px;top:600px;width:17px;height:2px;background:#e4e3e8"></div>
<div class="t" style="left:685.2px;top:569.4px;font-size:21px;line-height:21px;color:#1a1a1a;letter-spacing:0.061px;">000005</div>
<div style="left:772px;top:575.1px;width:13.5px;height:13.5px;border-radius:50%;background:#5f8fd0"></div>
<div class="t" style="left:936.5px;top:569.4px;font-size:21px;line-height:21px;color:#1a1a1a;letter-spacing:0.139px;">Position</div>
<div style="left:1082px;top:560.8px;width:52px;height:40.66px;overflow:hidden;position:absolute"><div class="t" style="left:0;top:8.6px;font-size:21px;line-height:21px;color:#1a1a1a;letter-spacing:0.9px">LOTT</div></div>
<div class="t" style="left:1138.0px;top:569.4px;font-size:21px;line-height:21px;color:#1a1a1a;letter-spacing:0.482px;">WIZN15A</div>
<div class="t" style="left:1355.8px;top:569.4px;font-size:21px;line-height:21px;color:#1a1a1a;letter-spacing:-0.211px;">1,00</div>
<div class="t" style="left:1455.9px;top:569.4px;font-size:21px;line-height:21px;color:#1a1a1a;letter-spacing:-0.211px;">0,00</div>
<div style="left:1586px;top:560.8px;width:406px;height:40.66px;overflow:hidden;position:absolute"><div class="t" style="left:5px;top:8.6px;font-size:21px;line-height:21px;color:#1a1a1a;letter-spacing:0.35px">Wilo Trinkwasser Zirkulationspumpe Star-</div></div>
<div style="left:681px;top:641px;width:1319px;height:2px;background:#dcdcdc"></div>
<div style="left:664px;top:641px;width:17px;height:2px;background:#e4e3e8"></div>
<div class="t" style="left:685.2px;top:610.1px;font-size:21px;line-height:21px;color:#1a1a1a;letter-spacing:0.061px;">000006</div>
<div style="left:772px;top:615.8px;width:13.5px;height:13.5px;border-radius:50%;background:#5f8fd0"></div>
<div class="t" style="left:936.5px;top:610.1px;font-size:21px;line-height:21px;color:#1a1a1a;letter-spacing:0.139px;">Position</div>
<div style="left:1082px;top:601.46px;width:52px;height:40.66px;overflow:hidden;position:absolute"><div class="t" style="left:0;top:8.6px;font-size:21px;line-height:21px;color:#1a1a1a;letter-spacing:0.9px">LOTT</div></div>
<div class="t" style="left:1138.0px;top:610.1px;font-size:21px;line-height:21px;color:#1a1a1a;letter-spacing:0.464px;">KN34002</div>
<div class="t" style="left:1355.8px;top:610.1px;font-size:21px;line-height:21px;color:#1a1a1a;letter-spacing:-0.211px;">1,00</div>
<div class="t" style="left:1455.9px;top:610.1px;font-size:21px;line-height:21px;color:#1a1a1a;letter-spacing:-0.211px;">0,00</div>
<div style="left:1586px;top:601.46px;width:406px;height:40.66px;overflow:hidden;position:absolute"><div class="t" style="left:5px;top:8.6px;font-size:21px;line-height:21px;color:#1a1a1a;letter-spacing:0.35px">Kampmann-Luftlenkjalousie 34002 2-reihi</div></div>
<div style="left:681px;top:681px;width:1319px;height:2px;background:#dcdcdc"></div>
<div style="left:664px;top:681px;width:17px;height:2px;background:#e4e3e8"></div>
<div class="t" style="left:685.2px;top:650.7px;font-size:21px;line-height:21px;color:#1a1a1a;letter-spacing:0.061px;">000007</div>
<div style="left:772px;top:656.4px;width:13.5px;height:13.5px;border-radius:50%;background:#5f8fd0"></div>
<div class="t" style="left:936.5px;top:650.7px;font-size:21px;line-height:21px;color:#1a1a1a;letter-spacing:0.139px;">Position</div>
<div style="left:1082px;top:642.12px;width:52px;height:40.66px;overflow:hidden;position:absolute"><div class="t" style="left:0;top:8.6px;font-size:21px;line-height:21px;color:#1a1a1a;letter-spacing:0.9px">LOTT</div></div>
<div class="t" style="left:1138.0px;top:650.7px;font-size:21px;line-height:21px;color:#1a1a1a;letter-spacing:0.417px;">VI771980</div>
<div class="t" style="left:1355.8px;top:650.7px;font-size:21px;line-height:21px;color:#1a1a1a;letter-spacing:-0.211px;">1,00</div>
<div class="t" style="left:1455.9px;top:650.7px;font-size:21px;line-height:21px;color:#1a1a1a;letter-spacing:-0.211px;">0,00</div>
<div style="left:1586px;top:642.12px;width:406px;height:40.66px;overflow:hidden;position:absolute"><div class="t" style="left:5px;top:8.6px;font-size:21px;line-height:21px;color:#1a1a1a;letter-spacing:0.35px">Viega WC Element Prevista Dry 8522 mit</div></div>
<div style="left:681px;top:722px;width:1319px;height:2px;background:#dcdcdc"></div>
<div style="left:664px;top:722px;width:17px;height:2px;background:#e4e3e8"></div>
<div class="t" style="left:685.2px;top:691.4px;font-size:21px;line-height:21px;color:#1a1a1a;letter-spacing:0.061px;">000008</div>
<div style="left:772px;top:697.1px;width:13.5px;height:13.5px;border-radius:50%;background:#5f8fd0"></div>
<div class="t" style="left:936.5px;top:691.4px;font-size:21px;line-height:21px;color:#1a1a1a;letter-spacing:0.139px;">Position</div>
<div style="left:1082px;top:682.78px;width:52px;height:40.66px;overflow:hidden;position:absolute"><div class="t" style="left:0;top:8.6px;font-size:21px;line-height:21px;color:#1a1a1a;letter-spacing:0.9px">LOTT</div></div>
<div class="t" style="left:1138.0px;top:691.4px;font-size:21px;line-height:21px;color:#1a1a1a;letter-spacing:0.464px;">DA10619</div>
<div class="t" style="left:1355.8px;top:691.4px;font-size:21px;line-height:21px;color:#1a1a1a;letter-spacing:-0.211px;">1,00</div>
<div class="t" style="left:1455.9px;top:691.4px;font-size:21px;line-height:21px;color:#1a1a1a;letter-spacing:-0.211px;">0,00</div>
<div style="left:1586px;top:682.78px;width:406px;height:40.66px;overflow:hidden;position:absolute"><div class="t" style="left:5px;top:8.6px;font-size:21px;line-height:21px;color:#1a1a1a;letter-spacing:0.35px">DM Wasserzähler-Bügel Q3 4,0 H G1 AG</div></div>
<div style="left:681px;top:763px;width:1319px;height:2px;background:#dcdcdc"></div>
<div style="left:664px;top:763px;width:17px;height:2px;background:#e4e3e8"></div>
<div style="left:680px;top:357.5px;width:2px;height:406.5px;background:#dcdcdc"></div>
<div style="left:766px;top:357.5px;width:2px;height:406.5px;background:#dcdcdc"></div>
<div style="left:824px;top:357.5px;width:2px;height:406.5px;background:#dcdcdc"></div>
<div style="left:928px;top:357.5px;width:2px;height:406.5px;background:#dcdcdc"></div>
<div style="left:1079px;top:357.5px;width:2px;height:406.5px;background:#dcdcdc"></div>
<div style="left:1135px;top:357.5px;width:2px;height:406.5px;background:#dcdcdc"></div>
<div style="left:1292px;top:357.5px;width:2px;height:406.5px;background:#dcdcdc"></div>
<div style="left:1398px;top:357.5px;width:2px;height:406.5px;background:#dcdcdc"></div>
<div style="left:1498px;top:357.5px;width:2px;height:406.5px;background:#dcdcdc"></div>
<div style="left:1583px;top:357.5px;width:2px;height:406.5px;background:#dcdcdc"></div>
<div style="left:1993px;top:357.5px;width:2px;height:406.5px;background:#dcdcdc"></div>
<div style="left:682px;top:1432px;width:1318px;height:29.5px;background:#f4f1f4"></div>
<div style="left:681.5px;top:1432px;width:30px;height:29.5px;background:#f2eff2"></div>
<svg style="left:690px;top:1439px" width="12" height="16" viewBox="0 0 12 16"><path d="M9 2 L3 8 L9 14" stroke="#b0b0b0" stroke-width="2" fill="none"/></svg>
<div style="left:711.6px;top:1432px;width:1162.4px;height:29.5px;background:#cdcdcd"></div>
<div style="left:653px;top:1528.5px;width:31px;height:31.2px;background:#dedede;border:1.5px solid #7d7d7d;box-sizing:border-box"></div>
<svg style="left:653px;top:1528.5px" width="31" height="31" viewBox="0 0 31 31"><path d="M9 9 V22" stroke="#1a1a1a" stroke-width="2"/><path d="M22 9 L14 15.5 L22 22" stroke="#1a1a1a" stroke-width="2" fill="none"/></svg>
<div style="left:688.6px;top:1528.5px;width:31px;height:31.2px;background:#dedede;border:1.5px solid #7d7d7d;box-sizing:border-box"></div>
<svg style="left:688.6px;top:1528.5px" width="31" height="31" viewBox="0 0 31 31"><path d="M19 9 L11.5 15.5 L19 22" stroke="#1a1a1a" stroke-width="2" fill="none"/></svg>
<div style="left:726.5px;top:1527.5px;width:61.5px;height:33px;background:#fff;border:1px solid #e4e4e4;box-sizing:border-box"></div>
<div class="t" style="left:797.6px;top:1532.7px;font-size:21px;line-height:21px;color:#1a1a1a;letter-spacing:0.211px;">von 8</div>
<div style="left:874.2px;top:1528.5px;width:30.5px;height:31.2px;background:#dedede;border:1.5px solid #7d7d7d;box-sizing:border-box"></div>
<svg style="left:874.2px;top:1528.5px" width="30.5" height="31" viewBox="0 0 30.5 31"><path d="M12 9 L19.5 15.5 L12 22" stroke="#1a1a1a" stroke-width="2" fill="none"/></svg>
<div style="left:909.7px;top:1528.5px;width:31px;height:31.2px;background:#dedede;border:1.5px solid #7d7d7d;box-sizing:border-box"></div>
<svg style="left:909.7px;top:1528.5px" width="31" height="31" viewBox="0 0 31 31"><path d="M9 9 L17 15.5 L9 22" stroke="#1a1a1a" stroke-width="2" fill="none"/><path d="M22 9 V22" stroke="#1a1a1a" stroke-width="2"/></svg>
<div style="left:950.2px;top:1528.5px;width:30.5px;height:31.2px;background:#dedede;border:1.5px solid #7d7d7d;box-sizing:border-box"></div>
<svg style="left:950.2px;top:1528.5px" width="30.5" height="31" viewBox="0 0 30.5 31"><path d="M15.25 7 V24 M7 15.5 H23.5" stroke="#111" stroke-width="2.8"/></svg>
<div style="left:1025.8px;top:1527px;width:262.7px;height:32.7px;background:#fff;border:1px solid #e0e0e0;box-sizing:border-box;border-radius:2px"></div>
<div class="t" style="left:1034.7px;top:1532.7px;font-size:21px;line-height:21px;color:#2a2a3a;letter-spacing:0.366px;">1.Vorlage</div>
<svg style="left:1269px;top:1540px" width="13" height="8" viewBox="0 0 13 8"><path d="M1 1 H12 L6.5 7 Z" fill="#222"/></svg>
<div style="left:1311.7px;top:1509.8px;width:169.2px;height:69.2px;background:#bee6fd;border:1.5px solid #5a8fc4;box-sizing:border-box"></div>
<svg style="left:1320px;top:1519px" width="44" height="52" viewBox="0 0 44 52"><path d="M7 3.5 H26 L38 15.5 V45 Q38 48.5 34.5 48.5 H7 Q3.5 48.5 3.5 45 V7 Q3.5 3.5 7 3.5 Z" stroke="#0d0d0d" stroke-width="4.5" fill="none" stroke-linejoin="round"/><path d="M25 2 L39.5 16.5 H25 Z" fill="#0d0d0d"/><circle cx="19.6" cy="29.2" r="5.9" stroke="#0d0d0d" stroke-width="4.4" fill="none"/><path d="M23.8 33.4 L29.2 38.6" stroke="#0d0d0d" stroke-width="4.2"/></svg>
<div class="t" style="left:1378.0px;top:1532.9px;font-size:21px;line-height:21px;color:#2a3446;letter-spacing:0.434px;">Vorschau</div>
<div style="left:1498.9px;top:1509.8px;width:158.3px;height:69.2px;background:#dddddd;border:1.5px solid #7a7a7a;box-sizing:border-box"></div>
<svg style="left:1503px;top:1522px" width="52" height="46" viewBox="0 0 52 46"><path d="M13 12 V3.5 H38 V12" stroke="#0d0d0d" stroke-width="4.5" fill="none"/><path d="M12 33 H7 Q3.5 33 3.5 29.5 V16 Q3.5 12.5 7 12.5 H44 Q47.5 12.5 47.5 16 V29.5 Q47.5 33 44 33 H39" stroke="#0d0d0d" stroke-width="4.5" fill="none"/><rect x="13.5" y="26" width="24" height="16.5" stroke="#0d0d0d" stroke-width="4.5" fill="none"/></svg>
<div class="t" style="left:1566.0px;top:1532.9px;font-size:21px;line-height:21px;color:#2a2a3a;letter-spacing:0.173px;">Drucken</div>
</body></html>
